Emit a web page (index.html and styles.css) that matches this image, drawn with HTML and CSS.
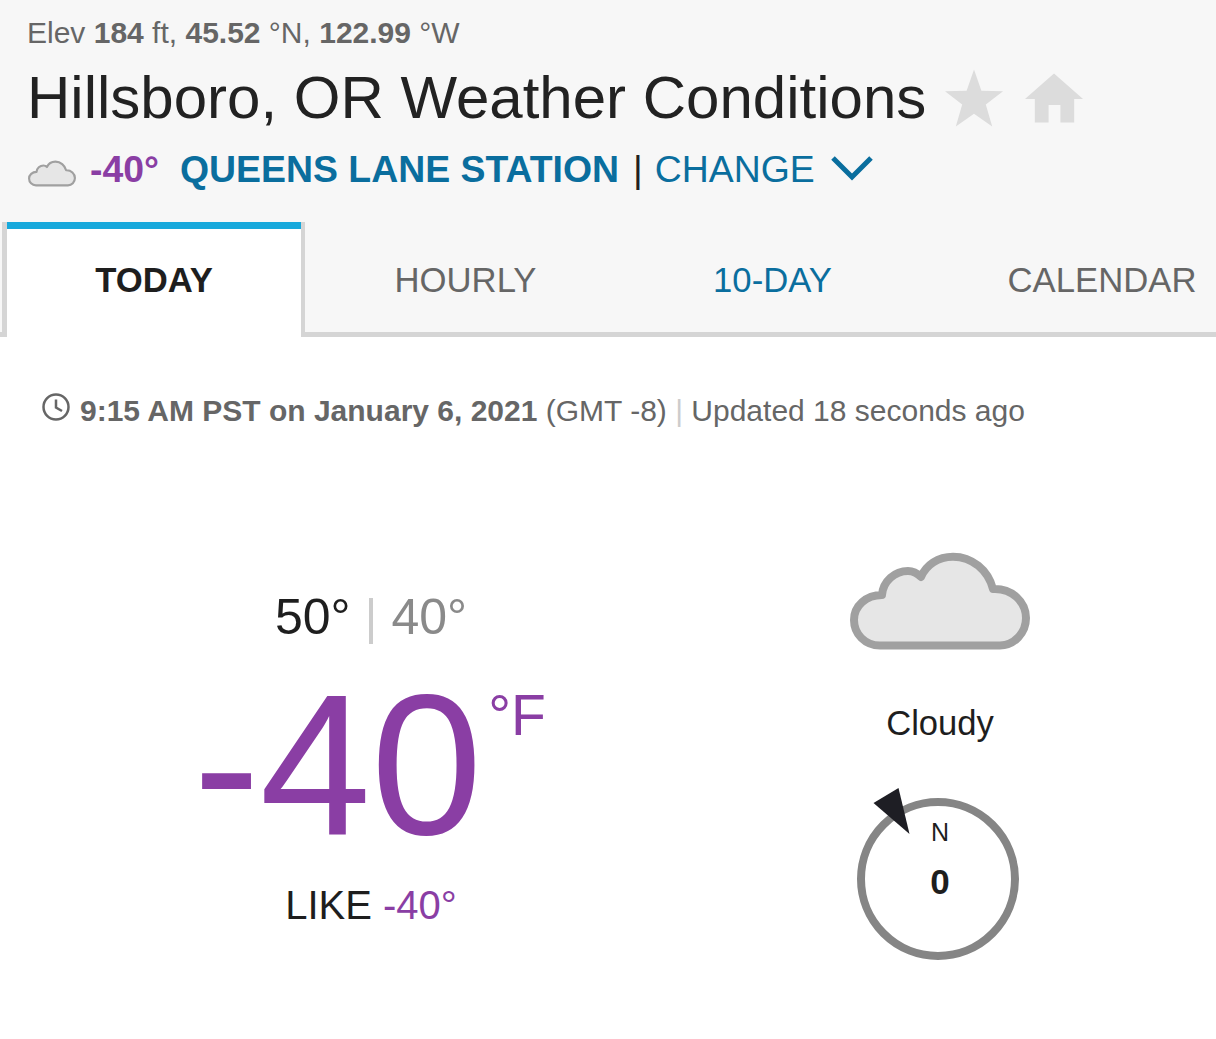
FILE: index.html
```html
<!DOCTYPE html>
<html lang="en">
<head>
<meta charset="utf-8">
<title>Hillsboro, OR Weather Conditions</title>
<link rel="stylesheet" href="styles.css">
</head>
<body>
<header class="head">
  <div class="elev">Elev <b>184</b> ft, <b>45.52</b> °N, <b>122.99</b> °W</div>
  <div class="title-row">
    <h1 class="title">Hillsboro, OR Weather Conditions</h1>
    <svg class="star" viewBox="0 0 60 60"><polygon points="29.500,0 37,21.500 59,22 41.500,35.500 48,58 29.500,45 11,58 17.500,35.500 0,22 22,21.500"/></svg>
    <svg class="home" viewBox="0 0 60 52"><path d="M29.500 0 59 26H50V50H36V32H24V50H10V26H0Z"/></svg>
  </div>
  <div class="station">
    <svg class="mini-cloud" viewBox="0 0 180 98"><path class="cloud-shape" d="M30 93.500C15 93.500 4 82 4 68 4 54 16 43 32 43 33 29 45 19 58 19 63 19 67 21 71 25 76 13 88 4.700 103 4.700 122 4.700 138 18 143 37 162 36 176 50 176 66 176 81 164 93.500 150 93.500Z"/></svg>
    <span class="st-temp">-40°</span>
    <a class="st-name">QUEENS LANE STATION</a>
    <span class="st-sep">|</span>
    <a class="st-change">CHANGE</a>
    <svg class="chev" viewBox="0 0 44 26"><path d="M3 3 22 22 41 3"/></svg>
  </div>
  <nav class="tabs">
    <a class="tab tab-active">TODAY</a>
    <a class="tab tab-hourly">HOURLY</a>
    <a class="tab tab-ten">10-DAY</a>
    <a class="tab tab-cal">CALENDAR</a>
  </nav>
</header>
<main class="main">
  <div class="updated">
    <svg class="clock" viewBox="0 0 28 28"><circle cx="14" cy="14" r="12.500"/><path d="M14 6.500V14.500L20 18"/></svg>
    <span><b>9:15 AM PST on January 6, 2021</b> (GMT -8) <span class="pipe">|</span> Updated 18 seconds ago</span>
  </div>
  <div class="cols">
    <section class="temps">
      <div class="hilo"><span class="hi">50°</span> <span class="pipe">|</span> <span class="lo">40°</span></div>
      <div class="now"><span class="now-val">-40</span><span class="now-unit">°F</span></div>
      <div class="like">LIKE <span class="like-val">-40°</span></div>
    </section>
    <section class="cond">
      <svg class="big-cloud" viewBox="0 0 180 98"><path class="cloud-shape" d="M30 93.500C15 93.500 4 82 4 68 4 54 16 43 32 43 33 29 45 19 58 19 63 19 67 21 71 25 76 13 88 4.700 103 4.700 122 4.700 138 18 143 37 162 36 176 50 176 66 176 81 164 93.500 150 93.500Z"/></svg>
      <div class="cond-text">Cloudy</div>
      <div class="wind">
        <svg class="wind-dial" viewBox="0 0 170 170">
          <circle cx="85" cy="85" r="77"/>
          <polygon points="20.500,9 45.500,-6 56.500,40"/>
        </svg>
        <div class="wind-text"><span class="wind-dir">N</span><b class="wind-speed">0</b></div>
      </div>
    </section>
  </div>
</main>
</body>
</html>
```

FILE: styles.css
```css
* { box-sizing: border-box; }
html, body { margin: 0; padding: 0; background: #fff; }
body { font-family: "Liberation Sans", Arial, sans-serif; color: #1e1e1e; height: 1039px; overflow: hidden; }
.head { background: #f7f7f7; height: 337px; display: flex; flex-direction: column; padding-top: 16px; }
.elev { font-size: 30px; line-height: 34px; color: #666; padding-left: 27px; white-space: nowrap; }
.title-row { display: flex; align-items: center; padding-left: 27px; margin-top: 13px; height: 70px; }
.title { margin: 0; font-size: 60px; line-height: 70px; font-weight: 400; color: #222; white-space: nowrap; }
.star { width: 59px; height: 60px; margin-left: 19px; fill: #dcdcdc; margin-top: 2px; }
.home { width: 59px; height: 52px; margin-left: 21px; fill: #dcdcdc; margin-top: 2px; }
.station { display: flex; align-items: center; padding-left: 28px; height: 44px; margin-top: 14px; font-size: 37.400px; white-space: nowrap; }
.mini-cloud { width: 48px; height: 27px; margin-top: 8px; }
.cloud-shape { fill: #e6e6e6; stroke: #a0a0a0; stroke-width: 8; stroke-linejoin: round; }
.st-temp { color: #8a3ea4; font-weight: 700; margin-left: 14px; }
.st-name { color: #0a6e9e; font-weight: 700; margin-left: 21px; }
.st-sep { color: #222; margin-left: 14px; }
.st-change { color: #0a6e9e; margin-left: 12px; }
.chev { width: 44px; height: 26px; margin-left: 15px; margin-top: -3px; fill: none; stroke: #0a6e9e; stroke-width: 5; }
.tabs { display: flex; margin-top: auto; height: 115px; border-bottom: 5px solid #d5d5d5; font-size: 34.700px; white-space: nowrap; }
.tab { flex: none; display: flex; align-items: center; justify-content: center; color: #666; padding-top: 6px; }
.tab-active { width: 303px; margin-left: 2px; margin-bottom: -5px; background: #fff; color: #1e1e1e; font-weight: 700; padding-top: 2px; border: solid #d5d5d5; border-width: 0 4px 0 5px; box-shadow: inset 0 7px 0 #17a9dc; }
.tab-hourly { width: 321px; }
.tab-ten { width: 293px; color: #0a6e9e; }
.tab-cal { width: 297px; padding-left: 69px; }
.main { display: flex; flex-direction: column; }
.updated { display: flex; align-items: center; gap: 10px; padding-left: 42px; margin-top: 54px; height: 40px; font-size: 30px; color: #666; white-space: nowrap; }
.clock { width: 28px; height: 28px; fill: none; stroke: #666; stroke-width: 2.500; margin-top: -8px; overflow: visible; }
.pipe { color: #ccc; }
.cols { display: grid; grid-template-columns: 742px 396px; margin-top: 121px; }
.temps { display: flex; flex-direction: column; align-items: center; padding-top: 37px; }
.hilo { font-size: 50px; line-height: 56px; color: #1e1e1e; white-space: nowrap; }
.lo { color: #8a8a8a; }
.now { display: flex; align-items: flex-start; margin-top: 35px; margin-right: 3px; color: #8a3ea4; height: 170px; }
.now-val { font-size: 200px; line-height: 170px; }
.now-unit { font-size: 57px; line-height: 60px; margin-left: 6px; margin-top: 5px; }
.like { font-size: 40px; line-height: 46px; margin-top: 32px; white-space: nowrap; }
.like-val { color: #8a3ea4; }
.cond { display: flex; flex-direction: column; align-items: center; }
.big-cloud { width: 180px; height: 98px; }
.cond-text { font-size: 34.600px; line-height: 40px; margin-top: 53px; }
.wind { position: relative; width: 170px; height: 170px; margin-top: 51px; margin-left: -5px; }
.wind-dial { width: 170px; height: 170px; display: block; overflow: visible; }
.wind-dial circle { fill: none; stroke: #858585; stroke-width: 8; }
.wind-dial polygon { fill: #1e1e24; }
.wind-text { position: absolute; inset: 0; display: flex; flex-direction: column; align-items: center; padding-top: 23px; padding-left: 5px; }
.wind-dir { font-size: 25px; line-height: 30px; }
.wind-speed { font-size: 35px; line-height: 44px; margin-top: 13px; }
```
